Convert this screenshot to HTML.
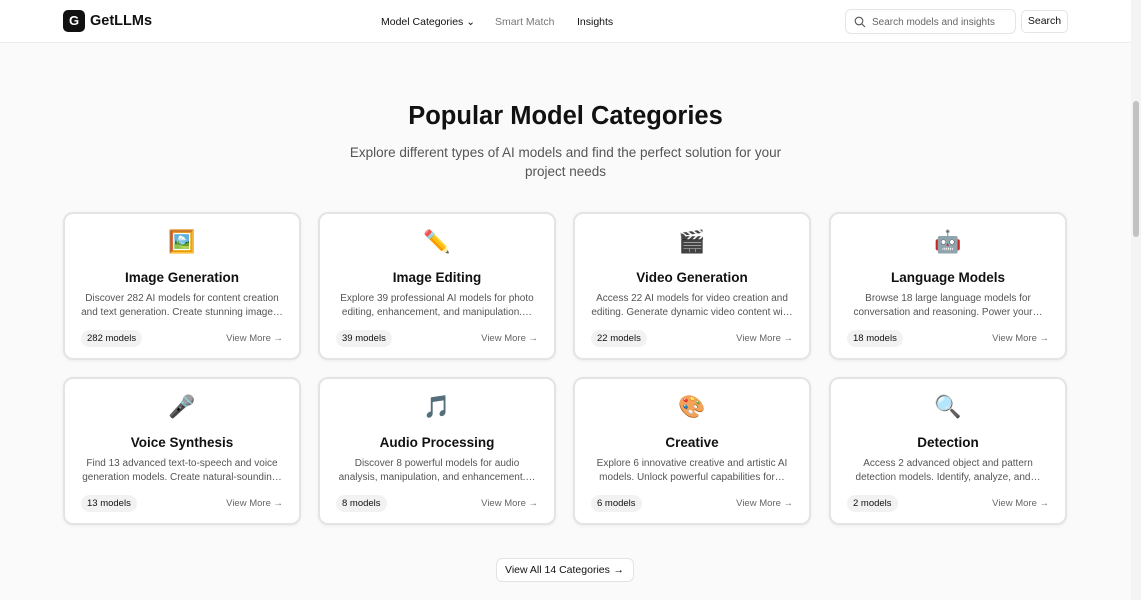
<!DOCTYPE html>
<html><head><meta charset="utf-8"><style>
*{box-sizing:border-box;margin:0;padding:0}
body{width:1141px;height:600px;overflow:hidden;background:#fafafa;font-family:"Liberation Sans","DejaVu Sans",sans-serif;color:#111;position:relative}
.hdr{position:absolute;left:0;top:0;width:1131px;height:43px;background:#fff;border-bottom:1px solid #eee}
.logo{position:absolute;left:63px;top:10px;width:22px;height:22px;background:#111;border-radius:5px;color:#fff;font-weight:bold;font-size:13px;text-align:center;line-height:22px}
.brand{position:absolute;left:90px;top:13px;font-size:14.5px;font-weight:bold}
.nav{position:absolute;top:16px;font-size:10.5px}
.search{position:absolute;left:845px;top:9px;width:171px;height:25px;border:1px solid #e5e5e5;border-radius:6px;background:#fff;font-size:10px;color:#666;padding:7px 0 0 26px;white-space:nowrap;overflow:hidden}
.sbtn{position:absolute;left:1021px;top:10px;width:47px;height:23px;border:1px solid #e5e5e5;border-radius:5px;background:#fff;font-size:10.5px;text-align:center;line-height:21px}
.scroll{position:absolute;left:1131px;top:0;width:10px;height:600px;background:#f4f4f4}
.thumb{position:absolute;left:1133px;top:101px;width:6px;height:136px;background:#c2c2c2;border-radius:3px}
h1{position:absolute;left:0;width:1131px;top:102px;text-align:center;font-size:25.5px;font-weight:bold}
.sub{position:absolute;left:340px;width:451px;top:143px;text-align:center;font-size:13.5px;color:#555;line-height:19px}
.card{position:absolute;width:238px;height:148px;background:#fff;border:2px solid #e4e4e4;border-radius:10px;text-align:center;box-shadow:0 1px 3px rgba(0,0,0,.06)}
.ic{position:absolute;top:16px;left:0;width:100%;font-size:22px;font-family:"Noto Color Emoji","DejaVu Sans",sans-serif;line-height:26px}
.t{position:absolute;top:56px;width:100%;font-size:13.5px;font-weight:bold}
.d{position:absolute;top:78px;left:16px;right:16px;font-size:10px;color:#555;line-height:14px;height:28px;overflow:hidden}
.b{position:absolute;left:16px;top:116px;background:#f2f2f2;border-radius:9px;font-size:9.5px;padding:3px 6px;color:#111}
.v{position:absolute;right:16px;top:119px;font-size:9.5px;color:#666}
.all{position:absolute;left:496px;top:558px;width:138px;height:24px;border:1px solid #e3e3e3;border-radius:6px;background:#fff;font-size:10.5px;line-height:22px;padding-left:8px;white-space:nowrap}
</style></head><body>
<div class="hdr">
<div class="logo">G</div><div class="brand">GetLLMs</div>
<div class="nav" style="left:381px">Model Categories ⌄</div>
<div class="nav" style="left:495px;color:#777">Smart Match</div>
<div class="nav" style="left:577px">Insights</div>
<div class="search"><svg style="position:absolute;left:8px;top:6px" width="12" height="12" viewBox="0 0 12 12"><circle cx="5" cy="5" r="3.8" fill="none" stroke="#555" stroke-width="1.1"/><path d="M8 8l3 3" stroke="#555" stroke-width="1.1"/></svg>Search models and insights</div>
<div class="sbtn">Search</div>
</div>
<div class="scroll"></div><div class="thumb"></div>
<h1>Popular Model Categories</h1>
<div class="sub">Explore different types of AI models and find the perfect solution for your project needs</div>

<div class="card" style="left:63px;top:212px"><div class="ic">🖼️</div><div class="t">Image Generation</div><div class="d">Discover 282 AI models for content creation and text generation. Create stunning image…</div><div class="b">282 models</div><div class="v">View More →</div></div>
<div class="card" style="left:318px;top:212px"><div class="ic">✏️</div><div class="t">Image Editing</div><div class="d">Explore 39 professional AI models for photo editing, enhancement, and manipulation.…</div><div class="b">39 models</div><div class="v">View More →</div></div>
<div class="card" style="left:573px;top:212px"><div class="ic">🎬</div><div class="t">Video Generation</div><div class="d">Access 22 AI models for video creation and editing. Generate dynamic video content wi…</div><div class="b">22 models</div><div class="v">View More →</div></div>
<div class="card" style="left:829px;top:212px"><div class="ic">🤖</div><div class="t">Language Models</div><div class="d">Browse 18 large language models for conversation and reasoning. Power your…</div><div class="b">18 models</div><div class="v">View More →</div></div>
<div class="card" style="left:63px;top:377px"><div class="ic">🎤</div><div class="t">Voice Synthesis</div><div class="d">Find 13 advanced text-to-speech and voice generation models. Create natural-soundin…</div><div class="b">13 models</div><div class="v">View More →</div></div>
<div class="card" style="left:318px;top:377px"><div class="ic">🎵</div><div class="t">Audio Processing</div><div class="d">Discover 8 powerful models for audio analysis, manipulation, and enhancement.…</div><div class="b">8 models</div><div class="v">View More →</div></div>
<div class="card" style="left:573px;top:377px"><div class="ic">🎨</div><div class="t">Creative</div><div class="d">Explore 6 innovative creative and artistic AI models. Unlock powerful capabilities for…</div><div class="b">6 models</div><div class="v">View More →</div></div>
<div class="card" style="left:829px;top:377px"><div class="ic">🔍</div><div class="t">Detection</div><div class="d">Access 2 advanced object and pattern detection models. Identify, analyze, and…</div><div class="b">2 models</div><div class="v">View More →</div></div>

<div class="all">View All 14 Categories <span style="position:absolute;right:9px">→</span></div>
</body></html>
